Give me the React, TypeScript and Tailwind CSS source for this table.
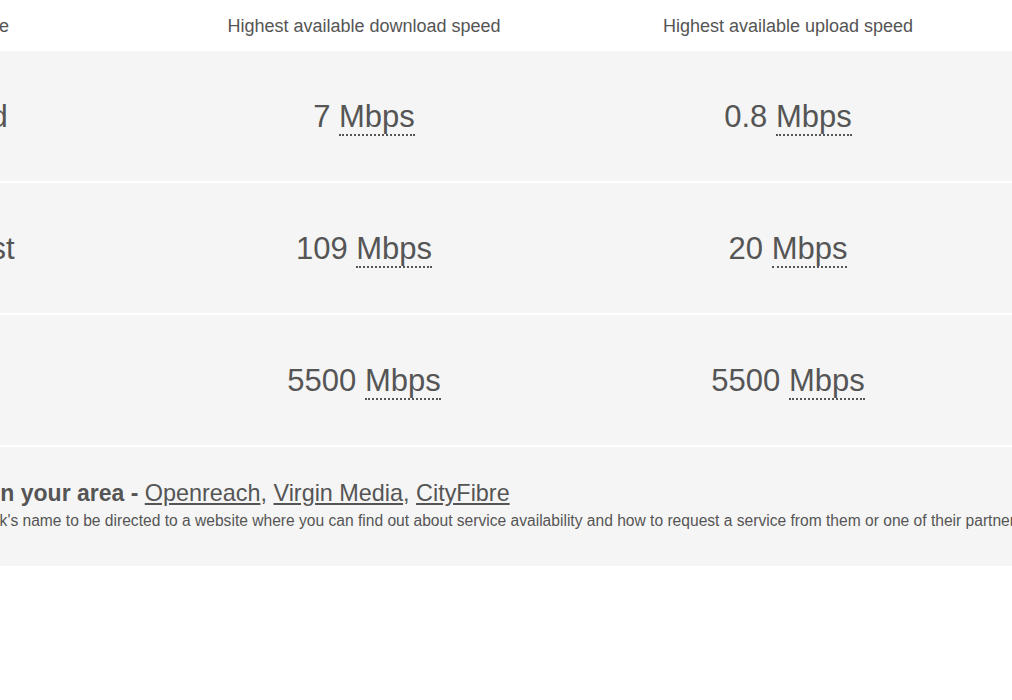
import React from "react";

const rows = [
  { name: "Standard", down: "7", up: "0.8" },
  { name: "Superfast", down: "109", up: "20" },
  { name: "Ultrafast", down: "5500", up: "5500" },
];

function Speed({ value }: { value: string }) {
  return (
    <span className="text-[31px] leading-none text-[#555555]">
      {value}{" "}
      <abbr title="Megabits per second" className="no-underline border-b-2 border-dotted border-[#555555]">
        Mbps
      </abbr>
    </span>
  );
}

export default function App() {
  return (
    <div className="w-full min-h-[700px] overflow-hidden bg-white" style={{ fontFamily: '"Liberation Sans", Arial, sans-serif' }}>
      <div className="ml-[-118px] w-[1300px]">
        <div className="grid grid-cols-[270px_424px_424px] h-[51px] pt-[2px] items-center text-[18px] text-[#555555] bg-white">
          <div>Broadband type</div>
          <div className="text-center">Highest available download speed</div>
          <div className="text-center">Highest available upload speed</div>
        </div>
        {rows.map((r) => (
          <div
            key={r.name}
            className="grid grid-cols-[270px_424px_424px] h-[132px] pt-[2px] items-center bg-[#f5f5f5] border-b-2 border-white"
          >
            <div className="text-[31px] text-[#555555]">{r.name}</div>
            <div className="text-center">
              <Speed value={r.down} />
            </div>
            <div className="text-center">
              <Speed value={r.up} />
            </div>
          </div>
        ))}
        <div className="h-[119px] bg-[#f5f5f5] pt-[33px] text-[#555555]">
          <div className="text-[23px] leading-[26px] ml-[2px] whitespace-nowrap">
            <span className="font-bold">Networks in your area - </span>
            <span className="text-[23.4px]">
              <a href="#" className="underline">Openreach</a>,{" "}
              <a href="#" className="underline">Virgin Media</a>,{" "}
              <a href="#" className="underline">CityFibre</a>
            </span>
          </div>
          <div className="text-[15.6px] leading-[18px] mt-[6px] ml-[-2px] whitespace-nowrap">
            Click on a network's name to be directed to a website where you can find out about service availability and how to request a service from them or one of their partners.
          </div>
        </div>
      </div>
    </div>
  );
}
